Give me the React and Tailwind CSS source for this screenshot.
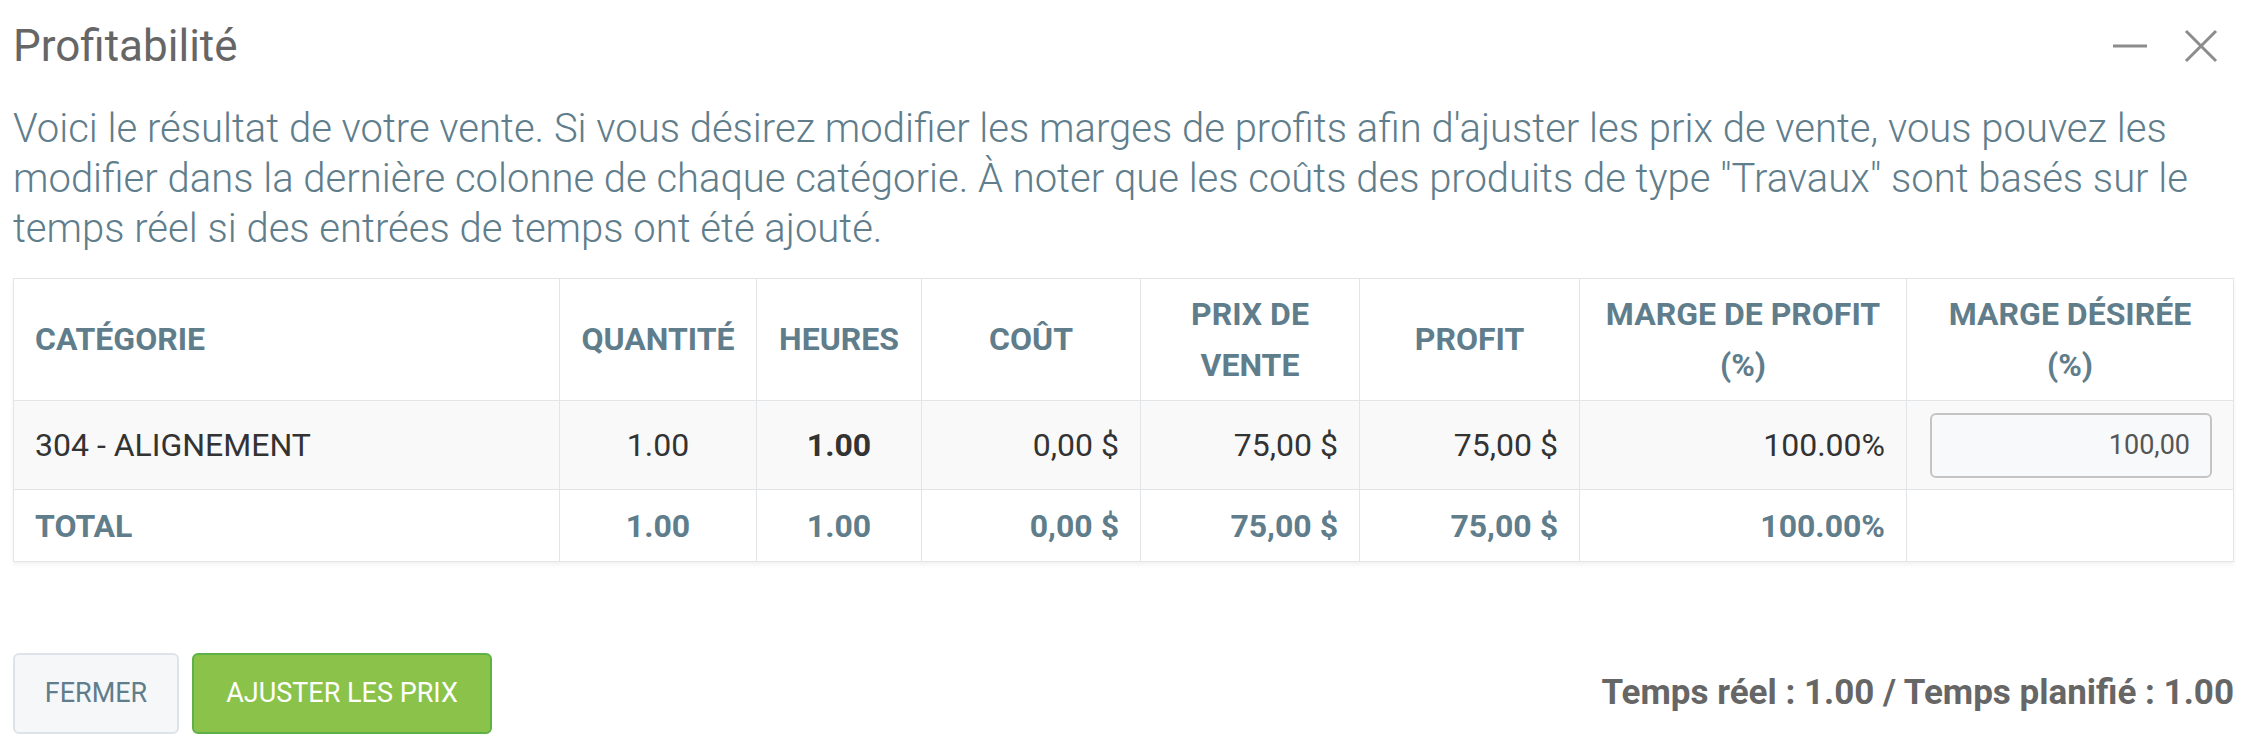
import React from "react";

const rows = [
  {
    cat: "304 - ALIGNEMENT",
    qty: "1.00",
    hours: "1.00",
    cost: "0,00 $",
    price: "75,00 $",
    profit: "75,00 $",
    margin: "100.00%",
    wanted: "100,00",
  },
];

const total = {
  qty: "1.00",
  hours: "1.00",
  cost: "0,00 $",
  price: "75,00 $",
  profit: "75,00 $",
  margin: "100.00%",
};

const cell = "border border-[#e1e5e8] px-[21px]";

const App = () => {
  return (
    <div className="min-h-screen bg-white pl-[13px] pr-[15px] font-['Roboto',sans-serif]">
      {/* titre + actions */}
      <header className="flex h-[92px] items-center justify-between">
        <h1 className="text-[44px] leading-none text-[#666]">Profitabilité</h1>
        <div className="flex items-center gap-[36px] pr-[16px] text-[#8c8c8c]">
          <svg width="36" height="36" viewBox="0 0 36 36">
            <path d="M1 18h34" stroke="currentColor" strokeWidth="3" />
          </svg>
          <svg width="34" height="34" viewBox="0 0 34 34">
            <path
              d="M2 2l30 30M32 2L2 32"
              stroke="currentColor"
              strokeWidth="3"
            />
          </svg>
        </div>
      </header>

      <p className="mt-[12px] text-[40px] font-light leading-[50px] text-[#607d8b]">
        Voici le résultat de votre vente. Si vous désirez modifier les marges
        de profits afin d'ajuster les prix de vente, vous pouvez les modifier
        dans la dernière colonne de chaque catégorie. À noter que les coûts des
        produits de type "Travaux" sont basés sur le temps réel si des entrées
        de temps ont été ajouté.
      </p>

      <table className="mt-[24px] w-full table-fixed border-collapse border border-[#e1e5e8] text-[32px] shadow-[0_3px_4px_rgba(0,0,0,0.05)]">
        <colgroup>
          <col className="w-[546px]" />
          <col className="w-[197px]" />
          <col className="w-[165px]" />
          <col className="w-[219px]" />
          <col className="w-[219px]" />
          <col className="w-[220px]" />
          <col className="w-[327px]" />
          <col />
        </colgroup>
        <thead>
          <tr className="h-[122px] text-center font-bold uppercase leading-[51px] text-[#607d8b]">
            <th className={`${cell} text-left`}>Catégorie</th>
            <th className="border border-[#e1e5e8] px-[4px]">Quantité</th>
            <th className="border border-[#e1e5e8] px-[4px]">Heures</th>
            <th className={cell}>Coût</th>
            <th className={cell}>
              Prix de
              <br />
              vente
            </th>
            <th className={cell}>Profit</th>
            <th className="border border-[#e1e5e8] px-[4px]">
              Marge de profit
              <br />
              (%)
            </th>
            <th className="border border-[#e1e5e8] px-[4px]">
              Marge désirée
              <br />
              (%)
            </th>
          </tr>
        </thead>
        <tbody>
          {rows.map((r) => (
            <tr key={r.cat} className="h-[89px] bg-[#f9f9f9] text-[#333]">
              <td className={cell}>{r.cat}</td>
              <td className={`${cell} text-center`}>{r.qty}</td>
              <td className={`${cell} text-center font-bold`}>{r.hours}</td>
              <td className={`${cell} text-right`}>{r.cost}</td>
              <td className={`${cell} text-right`}>{r.price}</td>
              <td className={`${cell} text-right`}>{r.profit}</td>
              <td className={`${cell} text-right`}>{r.margin}</td>
              <td className="border border-[#e1e5e8] pl-[23px] pr-[21px]">
                <input
                  defaultValue={r.wanted}
                  className="h-[65px] w-full rounded-[6px] border-2 border-[#c4c4c4] bg-[#f8f9fa] px-[20px] text-right text-[27px] text-[#555] outline-none"
                />
              </td>
            </tr>
          ))}
          <tr className="h-[72px] font-bold text-[#607d8b]">
            <td className={cell}>TOTAL</td>
            <td className={`${cell} text-center`}>{total.qty}</td>
            <td className={`${cell} text-center`}>{total.hours}</td>
            <td className={`${cell} text-right`}>{total.cost}</td>
            <td className={`${cell} text-right`}>{total.price}</td>
            <td className={`${cell} text-right`}>{total.profit}</td>
            <td className={`${cell} text-right`}>{total.margin}</td>
            <td className={cell}></td>
          </tr>
        </tbody>
      </table>

      {/* pied */}
      <footer className="mt-[91px] flex items-center justify-between">
        <div className="flex gap-[13px]">
          <button className="h-[81px] w-[166px] rounded-[6px] border-2 border-[#dde3e8] bg-[#f5f7f9] text-[27px] text-[#607d8b]">
            FERMER
          </button>
          <button className="h-[81px] w-[300px] rounded-[6px] border-2 border-[#5db146] bg-[#8bc34a] text-[27px] text-white">
            AJUSTER LES PRIX
          </button>
        </div>
        <div className="text-[35px] font-bold text-[#666]">
          Temps réel : 1.00 / Temps planifié : 1.00
        </div>
      </footer>
    </div>
  );
};

export default App;
